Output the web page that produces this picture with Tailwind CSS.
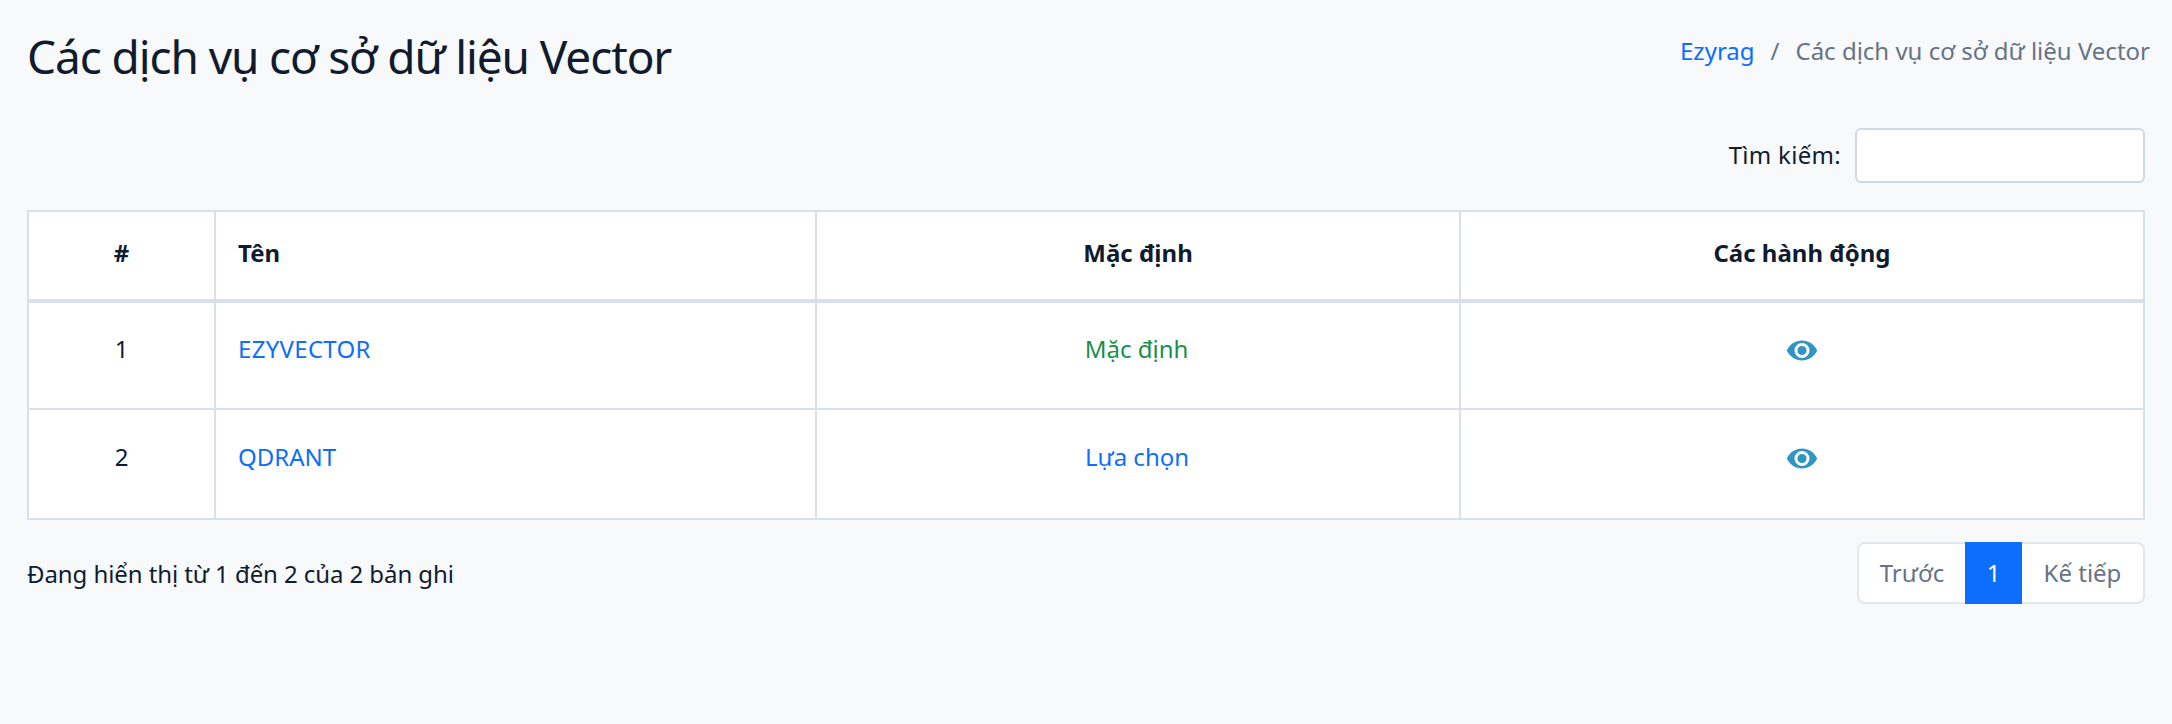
<!DOCTYPE html>
<html lang="en">
<head>
    <meta charset="UTF-8">
    <title>Các dịch vụ cơ sở dữ liệu Vector</title>
    <script src="https://cdn.jsdelivr.net/npm/@tailwindcss/browser@4"></script>
</head>
<body class="bg-[#f7f9fb] font-['Noto_Sans',sans-serif] text-[24px] text-[#111b2e] h-[724px] overflow-hidden">
    <main class="pl-[27px] pr-[27px]">
        <!-- Page header -->
        <div class="flex justify-between h-[128px]">
            <h1 class="text-[46px] leading-[58px] pt-[27px] tracking-[-1.1px]">Các dịch vụ cơ sở dữ liệu Vector</h1>
            <div class="flex gap-[16px] pt-[35px] leading-[32px] text-[#667384] -mr-[5px]">
                <a class="text-[#0d6efd]">Ezyrag</a>
                <span>/</span>
                <span>Các dịch vụ cơ sở dữ liệu Vector</span>
            </div>
        </div>

        <!-- Search -->
        <div class="flex justify-end items-center gap-[14px] h-[55px] mb-[27px]">
            <label class="pb-[2px] tracking-[0.3px]">Tìm kiếm:</label>
            <input type="text" class="w-[290px] h-[55px] bg-white border-2 border-[#cfd8e3] rounded-[6px]">
        </div>

        <!-- Table -->
        <table class="w-[2118px] table-fixed border-collapse bg-white">
            <thead>
                <tr class="h-[90px] font-bold">
                    <th class="w-[187px] border-2 border-b-[4px] border-[#d9e0e9] pb-[5px] text-center">#</th>
                    <th class="w-[601px] border-2 border-b-[4px] border-[#d9e0e9] pb-[5px] text-left pl-[22px]">Tên</th>
                    <th class="w-[644px] border-2 border-b-[4px] border-[#d9e0e9] pb-[5px] text-center">Mặc định</th>
                    <th class="border-2 border-b-[4px] border-[#d9e0e9] pb-[5px] text-center">Các hành động</th>
                </tr>
            </thead>
            <tbody class="text-center">
                <tr class="h-[108px]">
                    <td class="border-2 border-[#d9e0e9] pb-[13px]">1</td>
                    <td class="border-2 border-[#d9e0e9] pb-[13px] pl-[22px] text-left"><a class="text-[#0d6efd] tracking-[0.3px]">EZYVECTOR</a></td>
                    <td class="border-2 border-[#d9e0e9] pb-[13px] pr-[3px] text-[#198f4a]">Mặc định</td>
                    <td class="border-2 border-[#d9e0e9] pb-[10px]">
                        <svg class="w-[30px] h-[21px] mx-auto" viewBox="0 0 576 400" fill="#2f96c4"><path fill-rule="evenodd" d="M572.5 185C518 79 411 8 288 8S58 79 3.5 185a32 32 0 0 0 0 30C58 321 165 392 288 392s230-71 284.5-177a32 32 0 0 0 0-30zM288 344a144 144 0 1 1 0-288 144 144 0 0 1 0 288zm0-232a88 88 0 1 0 0 176 88 88 0 0 0 0-176z"/></svg>
                    </td>
                </tr>
                <tr class="h-[110px]">
                    <td class="border-2 border-[#d9e0e9] pb-[15px]">2</td>
                    <td class="border-2 border-[#d9e0e9] pb-[15px] pl-[22px] text-left"><a class="text-[#0d6efd]">QDRANT</a></td>
                    <td class="border-2 border-[#d9e0e9] pb-[15px] pr-[2px] text-[#0d6efd]">Lựa chọn</td>
                    <td class="border-2 border-[#d9e0e9] pb-[11px]">
                        <svg class="w-[30px] h-[21px] mx-auto" viewBox="0 0 576 400" fill="#2f96c4"><path fill-rule="evenodd" d="M572.5 185C518 79 411 8 288 8S58 79 3.5 185a32 32 0 0 0 0 30C58 321 165 392 288 392s230-71 284.5-177a32 32 0 0 0 0-30zM288 344a144 144 0 1 1 0-288 144 144 0 0 1 0 288zm0-232a88 88 0 1 0 0 176 88 88 0 0 0 0-176z"/></svg>
                    </td>
                </tr>
            </tbody>
        </table>

        <!-- Footer -->
        <div class="flex justify-between items-center mt-[22px]">
            <div class="pt-[1px] tracking-[-0.08px]">Đang hiển thị từ 1 đến 2 của 2 bản ghi</div>
            <div class="flex h-[62px] items-stretch text-[#667384] bg-white border-2 border-[#e2e7ee] rounded-[8px]">
                <span class="w-[106px] flex items-center justify-center">Trước</span>
                <span class="w-[57px] -my-[2px] flex items-center justify-center bg-[#0d6efd] text-white">1</span>
                <span class="w-[121px] flex items-center justify-center">Kế tiếp</span>
            </div>
        </div>
    </main>
</body>
</html>
